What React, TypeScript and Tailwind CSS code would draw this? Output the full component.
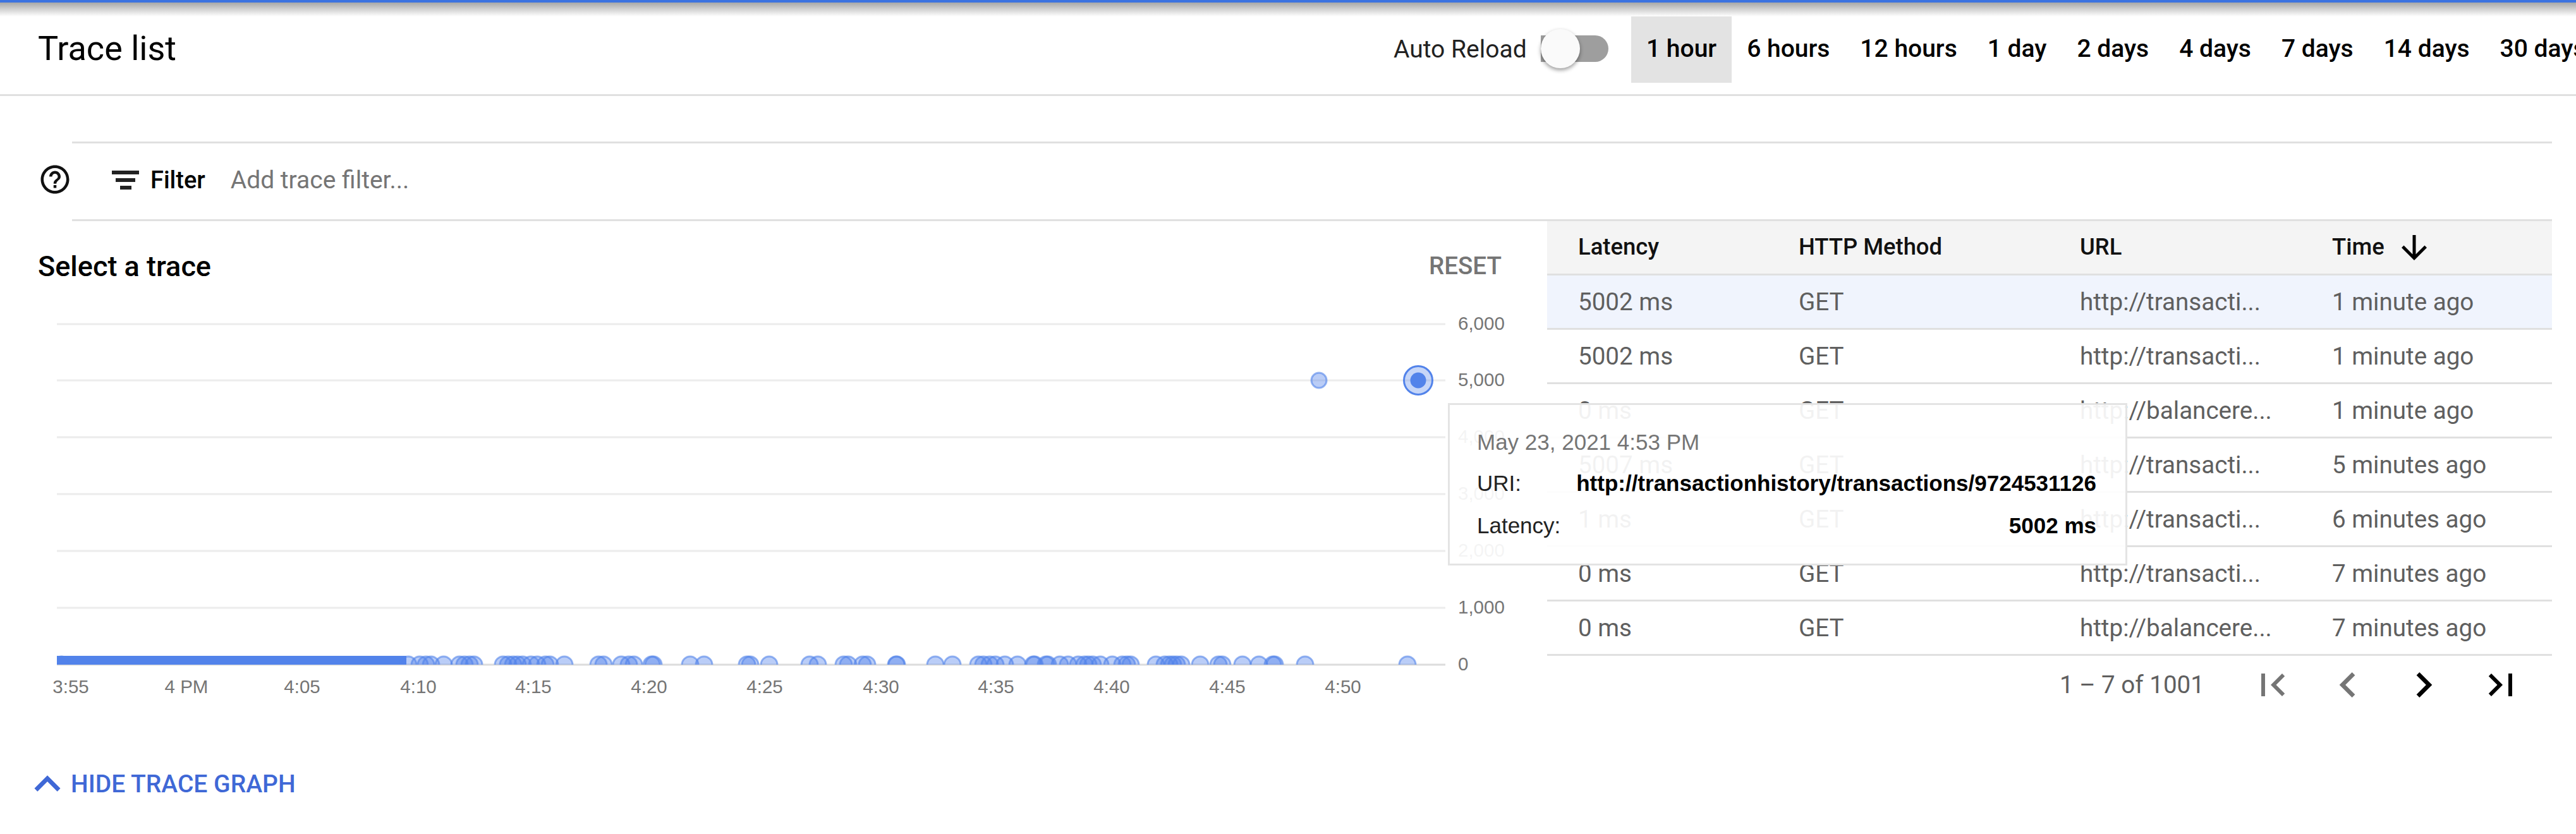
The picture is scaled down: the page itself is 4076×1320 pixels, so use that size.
import React from "react"

const tabs = ["1 hour", "6 hours", "12 hours", "1 day", "2 days", "4 days", "7 days", "14 days", "30 days"]

const rows = [
  { latency: "5002 ms", url: "http://transacti...", time: "1 minute ago" },
  { latency: "5002 ms", url: "http://transacti...", time: "1 minute ago" },
  { latency: "0 ms", url: "http://balancere...", time: "1 minute ago" },
  { latency: "5007 ms", url: "http://transacti...", time: "5 minutes ago" },
  { latency: "1 ms", url: "http://transacti...", time: "6 minutes ago" },
  { latency: "0 ms", url: "http://transacti...", time: "7 minutes ago" },
  { latency: "0 ms", url: "http://balancere...", time: "7 minutes ago" },
]

const gridLines = [
  { y: 513, label: "6,000" },
  { y: 602, label: "5,000" },
  { y: 692, label: "4,000" },
  { y: 782, label: "3,000" },
  { y: 872, label: "2,000" },
  { y: 962, label: "1,000" },
  { y: 1052, label: "0" },
]

const timeLabels: [number, string][] = [
  [112, "3:55"], [295, "4 PM"], [478, "4:05"], [662, "4:10"], [844, "4:15"], [1027, "4:20"],
  [1210, "4:25"], [1394, "4:30"], [1576, "4:35"], [1759, "4:40"], [1942, "4:45"], [2125, "4:50"],
]

// x positions of the dots lying on the zero line
const zeroDots = [
  97, 646, 664, 674, 682, 702, 727, 735, 743, 750,
  796, 804, 812, 819, 827, 840, 850, 863, 870, 893,
  947, 955, 983, 995, 1003, 1031, 1034, 1092, 1114, 1182, 1187, 1217,
  1281, 1294, 1335, 1342, 1365, 1372,
  1418, 1419, 1480, 1507, 1548, 1556, 1566, 1575, 1590, 1610, 1635, 1637, 1655, 1658,
  1677, 1690, 1706, 1716, 1722, 1729, 1741, 1760, 1776, 1783, 1789,
  1829, 1843, 1850, 1856, 1862, 1869, 1899, 1928, 1934, 1966, 1992, 2014, 2017, 2065, 2227,
]

function TraceChart() {
  return (
    <svg width="2448" height="774" viewBox="0 350 2448 774" className="block">
      <defs>
        <clipPath id="plot">
          <rect x="90" y="500" width="2197" height="552" />
        </clipPath>
      </defs>
      {gridLines.map((g) => (
        <g key={g.y}>
          <line x1="90" x2="2287" y1={g.y} y2={g.y} stroke={g.y === 1052 ? "#dcdcdc" : "#ececec"} strokeWidth="3" />
          <text x="2307" y={g.y + 9} fontFamily="Liberation Sans, sans-serif" fontSize="29.5" fill="#757575">
            {g.label}
          </text>
        </g>
      ))}
      {timeLabels.map(([x, label]) => (
        <text key={label} x={x} y="1097" textAnchor="middle" fontFamily="Liberation Sans, sans-serif" fontSize="29.5" fill="#757575">
          {label}
        </text>
      ))}
      <g clipPath="url(#plot)">
        <rect x="90" y="1038" width="553" height="15" fill="#5283ea" />
        {zeroDots.map((x, i) => (
          <circle key={i} cx={x} cy="1052" r="13" fill="#5283ea" fillOpacity="0.4" stroke="#5283ea" strokeOpacity="0.6" strokeWidth="3" />
        ))}
      </g>
      <circle cx="2087" cy="602" r="12" fill="#5283ea" fillOpacity="0.4" stroke="#5283ea" strokeOpacity="0.6" strokeWidth="3" />
      <circle cx="2244" cy="602" r="22.5" fill="#5283ea" fillOpacity="0.33" stroke="#5283ea" strokeWidth="3" />
      <circle cx="2244" cy="602" r="12.5" fill="#5283ea" />
    </svg>
  )
}

function TraceTable() {
  return (
    <div className="w-[1590px] shrink-0">
      <div className="flex h-[86px] items-center border-b-[3px] border-[#e0e0e0] bg-[#f4f4f4] text-[36.4px] font-medium text-[#111]">
        <div className="w-[398px] pl-[49px]">Latency</div>
        <div className="w-[445px]">HTTP Method</div>
        <div className="w-[399px]">URL</div>
        <div className="flex items-center">
          Time
          <svg viewBox="0 0 24 24" className="ml-[17px] h-[60px] w-[60px]" fill="#000">
            <path d="M20 12l-1.41-1.41L13 16.17V4h-2v12.17l-5.58-5.59L4 12l8 8 8-8z" />
          </svg>
        </div>
      </div>
      {rows.map((r, i) => (
        <div
          key={i}
          className={`flex h-[86px] items-center border-b-[3px] border-[#e0e0e0] text-[38.6px] text-[#5f5f5f] ${i === 0 ? "bg-[#f0f4fd]" : "bg-white"}`}
        >
          <div className="w-[398px] pl-[49px]">{r.latency}</div>
          <div className="w-[445px]">GET</div>
          <div className="w-[399px]">{r.url}</div>
          <div>{r.time}</div>
        </div>
      ))}
      <div className="flex h-[92px] items-center justify-end pr-[45px] text-[38.6px] text-[#5f5f5f]">
        <span className="mr-[72px]">1 – 7 of 1001</span>
        <svg viewBox="0 0 24 24" className="h-[72px] w-[72px]" fill="#757575">
          <path d="M18.41 16.59L13.82 12l4.59-4.59L17 6l-6 6 6 6zM6 6h2v12H6z" />
        </svg>
        <svg viewBox="0 0 24 24" className="ml-[43px] h-[80px] w-[80px]" fill="#757575">
          <path d="M15.41 7.41L14 6l-6 6 6 6 1.41-1.41L10.83 12z" />
        </svg>
        <svg viewBox="0 0 24 24" className="ml-[40px] h-[80px] w-[80px]" fill="#000">
          <path d="M10 6L8.59 7.41 13.17 12l-4.58 4.59L10 18l6-6z" />
        </svg>
        <svg viewBox="0 0 24 24" className="ml-[46px] h-[72px] w-[72px]" fill="#000">
          <path d="M5.59 7.41L10.18 12l-4.59 4.59L7 18l6-6-6-6zM16 6h2v12h-2z" />
        </svg>
      </div>
    </div>
  )
}

export default function App() {
  return (
    <div className="relative h-[1320px] w-[4076px] overflow-hidden bg-white font-['Roboto',sans-serif] text-black">
      <div className="h-1 bg-[#3c73e0]" />
      <div className="absolute left-0 top-1 h-[22px] w-full bg-gradient-to-b from-[#a8a8a8] to-white" />

      {/* Header */}
      <div className="flex h-[148px] items-center overflow-hidden border-b-[3px] border-[#e0e0e0]">
        <h1 className="w-[2205px] shrink-0 pl-[60px] text-[54px] font-normal">Trace list</h1>
        <span className="mt-[3px] w-[233px] shrink-0 text-[39px] text-[#222]">Auto Reload</span>
        <div className="relative h-[42px] w-[107px] shrink-0 rounded-r-full bg-[#9e9e9e]">
          <div className="absolute -top-[10px] left-0 h-[62px] w-[62px] rounded-full bg-[#fafafa] shadow-[0_3px_6px_rgba(0,0,0,0.4)]" />
        </div>
        <div className="ml-[36px] flex shrink-0">
          {tabs.map((t, i) => (
            <div
              key={t}
              className={`flex h-[108px] shrink-0 items-start px-[24px] pt-[25px] text-[39px] font-medium ${i === 0 ? "bg-[#e3e3e3]" : ""}`}
            >
              {t}
            </div>
          ))}
        </div>
      </div>

      {/* Filter bar */}
      <div className="flex pt-[72px]">
        <div className="flex w-[114px] shrink-0 items-center pb-[6px] pl-[60px]">
          <svg viewBox="0 0 24 24" className="h-[54px] w-[54px]" fill="#111">
            <path d="M11 18h2v-2h-2v2zm1-16C6.48 2 2 6.48 2 12s4.48 10 10 10 10-4.48 10-10S17.52 2 12 2zm0 18c-4.41 0-8-3.59-8-8s3.59-8 8-8 8 3.59 8 8-3.59 8-8 8zm0-14c-2.21 0-4 1.79-4 4h2c0-1.1.9-2 2-2s2 .9 2 2c0 2-3 1.75-3 5h2c0-2.25 3-2.5 3-5 0-2.21-1.79-4-4-4z" />
          </svg>
        </div>
        <div className="mr-[38px] flex h-[126px] flex-1 items-center border-y-[3px] border-[#e0e0e0] pb-[4px] pl-[63px]">
          <svg viewBox="0 0 43 30" className="h-[30px] w-[43px]" fill="#222">
            <path d="M0 0h43v6H0zM6 12h31v6H6zM13 24h18v6H13z" />
          </svg>
          <span className="ml-[18px] text-[38px] font-medium">Filter</span>
          <span className="ml-[40px] text-[39px] text-[#757575]">Add trace filter...</span>
        </div>
      </div>

      {/* Chart and table */}
      <div className="flex">
        <div className="relative h-[774px] w-[2448px] shrink-0">
          <div className="absolute left-[60px] top-[38px] text-[45px] font-medium">Select a trace</div>
          <div className="absolute left-[2261px] top-[42px] text-[38.5px] font-medium text-[#757575]">RESET</div>
          <TraceChart />
        </div>
        <TraceTable />
      </div>

      {/* Tooltip over chart and table */}
      <div className="absolute left-[2291px] top-[638px] z-10 h-[257px] w-[1075px] border-[3px] border-[#e4e4e4] bg-white/[0.92] pl-[43px] pr-[46px] pt-[33px] font-['Liberation_Sans',sans-serif] text-[35px] text-[#222]">
        <div className="text-[#757575]">May 23, 2021 4:53 PM</div>
        <div className="mt-[12px] flex justify-between">
          <span>URI:</span>
          <span className="font-bold text-black">http://transactionhistory/transactions/9724531126</span>
        </div>
        <div className="mt-[15px] flex justify-between">
          <span>Latency:</span>
          <span className="font-bold text-black">5002 ms</span>
        </div>
      </div>

      {/* Hide graph link */}
      <div className="absolute left-[34px] top-[1200px] flex items-center text-[39px] font-medium text-[#3f68d6]">
        <svg viewBox="0 0 24 24" className="h-[82px] w-[82px]" fill="#3f68d6">
          <path d="M12 8l-6 6 1.41 1.41L12 10.83l4.59 4.58L18 14z" />
        </svg>
        <span className="-ml-[4px]">HIDE TRACE GRAPH</span>
      </div>
    </div>
  )
}
